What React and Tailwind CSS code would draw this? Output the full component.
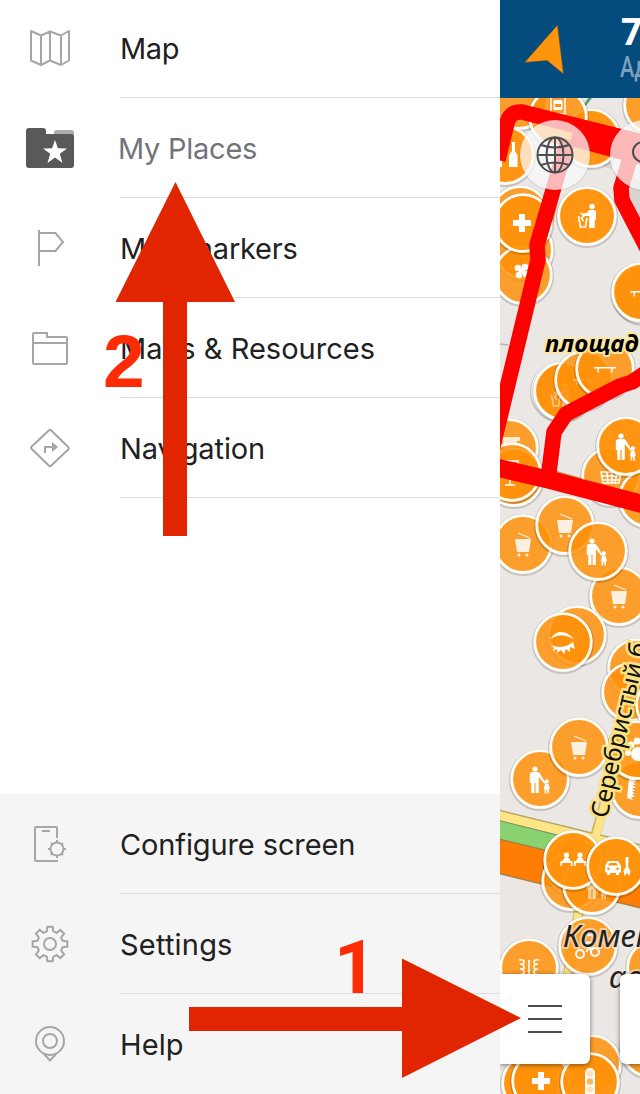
import React from "react";

const Line = ({ children }) => (
  <svg width="60" height="60" viewBox="0 0 60 60" fill="none" stroke="#a6a6a6" strokeWidth="2" className="shrink-0">
    {children}
  </svg>
);

const gear = (teeth, rOut, rIn, cx, cy) => {
  const pts = [];
  for (let i = 0; i < teeth; i++) {
    const a = (i * 2 * Math.PI) / teeth - Math.PI / 2;
    [[-0.25, rIn], [-0.15, rOut], [0.15, rOut], [0.25, rIn]].forEach(([d, r]) =>
      pts.push(`${(cx + r * Math.cos(a + d)).toFixed(2)},${(cy + r * Math.sin(a + d)).toFixed(2)}`)
    );
  }
  return pts.join(" ");
};

const icons = {
  map: (
    <Line>
      <path d="M11 13 21 17.500 30 13.500 41 17.500 49 13V42.500L41 47 30 42.500 21 47 11 42.500ZM21 17.500V47M30 13.500V42.500M41 17.500V47" strokeLinejoin="round" />
    </Line>
  ),
  places: (
    <Line>
      <path d="M34 13a3 3 0 0 1 3-3H51a3 3 0 0 1 3 3V22H34Z" transform="translate(0 2)" fill="#ababab" stroke="none" />
      <path d="M9 10H23q3 0 3 3v3H51q3 0 3 3V47q0 3-3 3H9q-3 0-3-3V13q0-3 3-3Z" fill="#595959" stroke="none" />
      <path d="m35 22 2.900 8.300 9.100.1-7.200 5.400 2.700 9.200-7.500-5.400-7.500 5.400 2.700-9.200-7.200-5.400 9.100-.1Z" fill="#fff" stroke="none" />
    </Line>
  ),
  flag: (
    <Line>
      <path d="M19 12V48M19 15H35.500L43 24 35.500 33H19" />
    </Line>
  ),
  folder: (
    <Line>
      <path d="M14 15H27V19H46q1 0 1 1V45q0 1-1 1H14q-1 0-1-1V16q0-1 1-1ZM13 25H47" />
    </Line>
  ),
  nav: (
    <Line>
      <path d="M29 12.500q1-1 2 0L48.500 29.500q1 1 0 2L31 48q-1 1-2 0L11.500 31q-1-1 0-2Z" transform="translate(0 -.3)" />
      <path d="M25 35V29H33" />
      <path d="m32 24 6 5-6 5Z" fill="#a6a6a6" stroke="none" />
    </Line>
  ),
  configure: (
    <Line>
      <path d="M37 24V14q0-1-1-1H16q-1 0-1 1V46q0 1 1 1H38M22 17H30" />
      <circle cx="37" cy="35" r="6.500" />
      <path d="M37 29V26M37 44V41M31 35H28M46 35H43M32.500 30.500 31 29M41.500 30.500 43 29M32.500 39.500 31 41M41.500 39.500 43 41" />
    </Line>
  ),
  settings: (
    <Line>
      <polygon points={gear(8, 17.5, 13, 30, 30)} />
      <circle cx="30" cy="30" r="6" />
    </Line>
  ),
  help: (
    <Line>
      <circle cx="30" cy="27" r="14" />
      <circle cx="30" cy="27" r="7" />
      <path d="M24 40 30 46.500 36 40" />
    </Line>
  ),
};

const top = [
  ["map", "Map"],
  ["places", "My Places"],
  ["flag", "Map markers"],
  ["folder", "Maps & Resources"],
  ["nav", "Navigation"],
];
const bottom = [
  ["configure", "Configure screen"],
  ["settings", "Settings"],
  ["help", "Help"],
];

const tracking = {
  map: "tracking-[-0.4px]",
  places: "tracking-[-0.25px]",
  flag: "tracking-[-0.2px]",
  folder: "tracking-[0.02px]",
  nav: "tracking-[-0.1px]",
  configure: "tracking-[-0.12px]",
  settings: "tracking-[0.2px]",
  help: "tracking-[0.1px]",
};

function Row({ icon, label, last }) {
  const active = icon === "places";
  return (
    <li className="flex h-[100px] items-stretch">
      <div className="flex w-[120px] items-center pl-[20px]">{icons[icon]}</div>
      <div className={`flex flex-1 items-center pt-[2px] ${last ? "border-b border-transparent" : "border-b border-[#dedede]"}`}>
        <span className={`whitespace-nowrap text-[29px] leading-none ${tracking[icon]} ${active ? "-ml-0.5 text-[#73747b]" : "text-[#212121]"}`}>
          {label}
        </span>
      </div>
    </li>
  );
}

const glyphs = {
  cross: <path d="M-3-9H3V-3H9V3H3V9H-3V3H-9V-3H-3Z" />,
  family: (
    <g>
      <circle cx="-5" cy="-10" r="2.600" />
      <path d="M-8.500-7H-1.500L0-5.500 5.500 4 4.500 5-1.200-2V14H-4.400V4H-5.600V14H-8.800V4H-10.200V-5.500Z" />
      <circle cx="6.800" cy="2.500" r="2.200" />
      <path d="M5 5H8.600L10 10H9V14.500H7.400V11H6.200V14.500H4.600V10H3.800Z" />
    </g>
  ),
  cart: (
    <g opacity=".85">
      <path d="M-8-5H8L6 8H-6Z" />
      <path d="m-5-11 12 5" stroke="#fff" strokeWidth="1.200" />
      <circle cx="-4" cy="11" r="1.500" />
      <circle cx="4" cy="11" r="1.500" />
    </g>
  ),
  bench: <path d="M-11-1H11V.500H7.500V4.500H6V.500H-6V4.500H-7.500V.500H-11Z" />,
  trash: (
    <g>
      <circle cx="5" cy="-9.500" r="2.700" />
      <path d="M2-6H7Q9-6 9-4V4H7.800V12H2.200V0L-4 0-5-2.500 0-3Z" />
      <path d="M-8.500 0-6.500 11H-1.500L0 2" fill="none" stroke="#fff" strokeWidth="1.700" />
      <path d="m-6-3 3 3-2.500 2 2 3" fill="none" stroke="#fff" strokeWidth="1.600" />
    </g>
  ),
  clover: (
    <g>
      <circle cx="-4" cy="-3" r="3.300" />
      <circle cx="3" cy="-4" r="3.300" />
      <circle cx="-3" cy="4" r="3.300" />
      <circle cx="4" cy="3" r="3.300" />
      <circle r="3" />
    </g>
  ),
  eye: (
    <g>
      <path d="M-12-3C-8-13 5-12 11-2 3-8-5-8-12-3Z" />
      <path d="M-12 3Q0 8 10 0L12 7 7 5V10L3 7 1 12-2 8-6 11-6 7-10 9-9 6Z" />
    </g>
  ),
  basket: <path d="M-10-5H10L8 6H-8ZM-9-1H9M-8 3H8M-4-5-3 6M1-5V6M6-5 4 6" fill="none" stroke="#fff" strokeWidth="1.500" />,
  bottles: (
    <g>
      <path d="M-8-8H-5V-1L-3 2V12H-10V2L-8-1Z" />
      <path d="M7-13H10V-4L12.500 0V12H4V0L7-4Z" />
    </g>
  ),
  tram: (
    <g>
      <rect x="-7" y="-9" width="14" height="17" fill="none" stroke="#fff" strokeWidth="1.500" />
      <rect x="-4.500" y="-6" width="9" height="10" rx="1.500" />
      <path d="M-3-2H3V1H-3Z" fill="#ff930c" />
    </g>
  ),
  meeting: (
    <g>
      <circle cx="-6.500" cy="-5" r="2.600" />
      <path d="M-10.500 1q4-8 8 0ZM-12.500 1H-.500V6H-2.200V3H-11V6H-12.500Z" />
      <circle cx="7" cy="-5" r="2.600" />
      <path d="M3 1q4-8 8 0ZM1 1H13V6H11.500V3H2.700V6H1Z" />
    </g>
  ),
  car: (
    <g>
      <path d="M-10-5H0L3 0V6.500H1V9H-2V7H-8V9H-11V6.500H-13V0Z" />
      <path d="M-8.500-3H-1.500L0-.500H-10Z" fill="#ff930c" />
      <circle cx="-9.500" cy="2.700" r="1.300" fill="#ff930c" />
      <circle cx="-.500" cy="2.700" r="1.300" fill="#ff930c" />
      <path d="M7.500-9H10.500L10.200 1 12.500 5 11.500 10 9 7 6.500 10 5.500 5 7.800 1Z" />
    </g>
  ),
  sign: <path d="M-8-11H8V-2H-8ZM-5-8H5M0-2V12M-5 13H5" fill="none" stroke="#fff" strokeWidth="1.600" />,
  moto: (
    <g fill="none" stroke="#fff" strokeWidth="2">
      <circle cx="-8" cy="8" r="4" />
      <circle cx="7" cy="6" r="4" />
      <path d="M-2 6 2 1 3 5M0-10a4 4 0 1 1 0 6L-5 0" />
    </g>
  ),
  magnet: <path d="M-10-8Q-5-9-5-6T-9-4Q-5-4-5-1T-9 1Q-5 1-5 4T-8 6M0-8V8M10-8Q5-9 5-6T9-4Q5-4 5-1T9 1Q5 1 5 4T8 6" fill="none" stroke="#fff" strokeWidth="1.600" />,
  lights: (
    <g>
      <rect x="-5" y="-12" width="10" height="30" rx="5" />
      <circle cx="0" cy="-6.500" r="3.200" fill="#fee0ba" />
      <circle cx="0" cy="1.500" r="3.200" fill="#ffb65d" />
      <circle cx="0" cy="9.500" r="3.200" fill="#fee0ba" />
    </g>
  ),
  paw: (
    <g>
      <circle cx="-6" cy="-5" r="3.500" />
      <circle cx="0" cy="-9" r="3.500" />
      <circle cx="-9" cy="3" r="3" />
      <circle cx="1" cy="4" r="7" />
    </g>
  ),
  comb: <path d="M-5-10 4-12 3-9H0L3-7H-1L2-4H-2L2-1H-2L1 2H-2L1 5H-2L1 8H-3L-1 11-7 9Z" />,
  table: <path d="M-8-5H11V-1H8L7 12H-4L-6-1H-9Z" opacity=".8" />,
};

const pois = [
  [519, 100, null], [591, 138, null, 0, 0, 1, true], [558, 117, "tram", 0, -11], [505, 155, "bottles", 0, 0, 1, true], [653, 105, null],
  [520, 215, null], [524, 250, null], [523, 275, "clover", -1, -4], [523, 223, "cross", -1, 0, 1, true],
  [587, 216, "trash", 0, 0, 1, true], [643, 294, null], [641, 292, "bench", 0, 0, 1, true],
  [561, 391, null], [563, 391, "trash", -3, 4, 0.5], [584, 380, "bench", 0, 0, 0.5], [605, 369, "bench", 0, -1],
  [509, 448, "table", 0, -6], [514, 477, null], [512, 472, "sign", -2, 0],
  [611, 476, "basket", 0, 1], [648, 498, null], [626, 446, "family", 0, 0, 1, true],
  [523, 544, "cart"], [565, 525, "cart"], [619, 596, "cart"], [598, 551, "family", -1],
  [577, 635, "cart", 0, 0, 0.2], [563, 642, "eye"],
  [637, 668, null], [631, 692, "comb", 4, -8, 0.8], [665, 705, null],
  [640, 789, "comb", -6, 0], [637, 750, "paw"], [540, 779, "family"], [579, 747, "cart"],
  [574, 866, null], [571, 881, null], [592, 885, "family", 5, 0, 0.6], [573, 860, "meeting", 0, 0, 1, true], [616, 866, "car", 2, 0, 1, true],
  [588, 946, "moto"], [529, 968, "magnet"], [656, 968, null],
  [650, 1048, null], [592, 1064, null], [531, 1083, null, 0, 0, 1, true], [541, 1081, "cross", 0, 0, 1, true], [590, 1082, "lights", 0, -2, 1, true],
];

function Poi({ p: [x, y, g, dx = 0, dy = 0, op = 1, solid = false] }) {
  return (
    <g transform={`translate(${x} ${y})`}>
      <circle cy="1" r="30" fill="none" stroke="#000" strokeWidth="2" opacity=".16" />
      <circle r="27.500" fill={solid ? "#ff920a" : "#ff8f06"} opacity={solid ? 0.96 : 0.83} />
      <circle r="28.300" fill="none" stroke="#fffdf6" strokeWidth="2.800" />
      {g && <g transform={`translate(${dx} ${dy})`} fill="#fff" opacity={op}>{glyphs[g]}</g>}
    </g>
  );
}

function MapCanvas() {
  return (
    <svg width="140" height="996" viewBox="500 98 140 996" className="block">
      <rect x="500" y="98" width="140" height="996" fill="#ebe7e5" />
      <path d="M500 344 508 345" stroke="#b9b3ae" strokeWidth="1.500" fill="none" />
      <path d="M588 98H592L586 106H583Z" fill="#5fa572" />
      <path d="M570 175 610 160 625 205 640 225V180L600 165Z" fill="#d9d5d3" />
      <g fill="none">
        <path d="M494 814 650 852" stroke="#b5a76c" strokeWidth="11" />
        <path d="M650 640 596 833M579 910 568 975" stroke="#c9b96d" strokeWidth="10" />
        <path d="M494 814 650 852M650 640 596 836M579 910 568 975" stroke="#fde485" strokeWidth="8" />
        <path d="M494 817 650 855" stroke="#fde485" strokeWidth="4" />
        <path d="M494 829 650 868" stroke="#7f8f62" strokeWidth="20" />
        <path d="M494 829 650 868" stroke="#88d36f" strokeWidth="18" />
        <path d="M494 855 650 893" stroke="#a8813f" strokeWidth="35" />
        <path d="M494 855 650 893" stroke="#ff7d05" strokeWidth="32" />
        <path d="M568 160 559 190 549 235" stroke="#c4a850" strokeWidth="3" />
        <path d="M545 477 650 507" stroke="#b99d4c" strokeWidth="18" />
      </g>
      {pois.map((p, i) => <Poi key={i} p={p} />)}
      <g fill="none" stroke="#fe0000" strokeWidth="15.500" strokeLinejoin="round">
        <path d="M498 160 507 123Q510 111 522 112L650 144" />
        <path d="M572 136 650 157" strokeWidth="20" />
        <path d="M568 140 556 180 537 245 538 260 492 450" />
        <path d="M632 152 621 188 622 200 648 250" />
        <path d="M650 370 632 382 620 386 566 414 554 432 548 480" />
        <path d="M490 466 550 480 650 506" strokeWidth="18" />
      </g>
      <g fontFamily="Noto Sans, sans-serif" style={{ paintOrder: "stroke" }} strokeLinejoin="round">
        <text x="545" y="352" fontSize="24" letterSpacing=".3" fontWeight="700" fontStyle="italic" fill="#000" stroke="#fbe7a5" strokeWidth="4">площад</text>
        <text transform="translate(607 819) rotate(-77)" fontSize="24.300" fill="#111" stroke="#fbe181" strokeWidth="5">Серебристый б</text>
        <g fontStyle="italic" fontSize="31" fill="#222" stroke="#f3ece5" strokeOpacity=".65" strokeWidth="4">
          <text x="563" y="947">Комен</text>
          <text x="609" y="988">ав</text>
        </g>
      </g>
      <g>
        <circle cx="555" cy="156" r="36" fill="#000" opacity=".05" />
        <circle cx="555" cy="155" r="35" fill="#fff" opacity=".72" />
        <g fill="none" stroke="#4d4d4d" strokeWidth="2">
          <circle cx="555" cy="155" r="17.500" />
          <ellipse cx="555" cy="155" rx="8.500" ry="17.500" />
          <path d="M555 137V173M537 155H573M541 145Q555 150 569 145M541 165Q555 160 569 165" />
        </g>
        <circle cx="645" cy="156" r="36" fill="#000" opacity=".05" />
        <circle cx="645" cy="155" r="35" fill="#fff" opacity=".72" />
        <circle cx="643" cy="152" r="10" fill="none" stroke="#4d4d4d" strokeWidth="2" />
      </g>
    </svg>
  );
}

export default function App() {
  return (
    <div className="relative flex h-[1094px] w-[640px] overflow-hidden bg-white" style={{ fontFamily: "Inter, sans-serif" }}>
      <nav className="flex w-[500px] shrink-0 flex-col justify-between">
        <ul className="-mt-[2px]">
          {top.map(([i, l]) => <Row key={i} icon={i} label={l} />)}
        </ul>
        <ul className="bg-[#f5f5f5]">
          {bottom.map(([i, l], n) => <Row key={i} icon={i} label={l} last={n === 2} />)}
        </ul>
      </nav>
      <main className="w-[140px] shrink-0 overflow-hidden">
        <header className="flex h-[98px] bg-[#044b7e]">
          <svg width="120" height="98" className="shrink-0">
            <path d="M57.500 25 63.500 74 47 60.500 24.500 62.500Z" fill="#ff950d" stroke="#5a4a35" strokeWidth=".6" />
          </svg>
          <div className="flex flex-col pt-[12px]">
            <span className="ml-px text-[37px] leading-[38px] font-bold text-white" style={{ fontFamily: "Open Sans, sans-serif" }}>7</span>
            <span className="origin-left scale-x-[0.72] text-[30px] leading-[34px] font-medium text-[#7f9fbe]" style={{ fontFamily: "Roboto, sans-serif" }}>Ад</span>
          </div>
        </header>
        <MapCanvas />
      </main>
      <button className="absolute top-[974px] left-[500px] flex h-[90px] w-[90px] flex-col items-center justify-center gap-[11px] rounded-r-md bg-white shadow-[0_1px_5px_rgba(0,0,0,0.5)] [clip-path:inset(-8px_-8px_-8px_0)]">
        <span className="h-[2px] w-[34px] bg-[#4d4d4d]" />
        <span className="h-[2px] w-[34px] bg-[#4d4d4d]" />
        <span className="h-[2px] w-[34px] bg-[#4d4d4d]" />
      </button>
      <div className="absolute top-[974px] left-[620px] h-[90px] w-[90px] rounded-md bg-white shadow-[0_1px_5px_rgba(0,0,0,0.5)]" />
      <svg className="pointer-events-none absolute inset-0" width="640" height="1094">
        <g fill="#ff2b05" fontWeight="700">
          <text x="103" y="387" fontSize="75" fontFamily="Liberation Sans, sans-serif">2</text>
          <text x="334" y="993" fontSize="74" fontFamily="Roboto, sans-serif">1</text>
        </g>
        <path d="M175.500 182 235 302H187V536H163V302H115.500Z" fill="#e12500" />
        <path d="M521 1018 402 1078V1031H189V1007H402V958.500Z" fill="#e12500" />
      </svg>
    </div>
  );
}
